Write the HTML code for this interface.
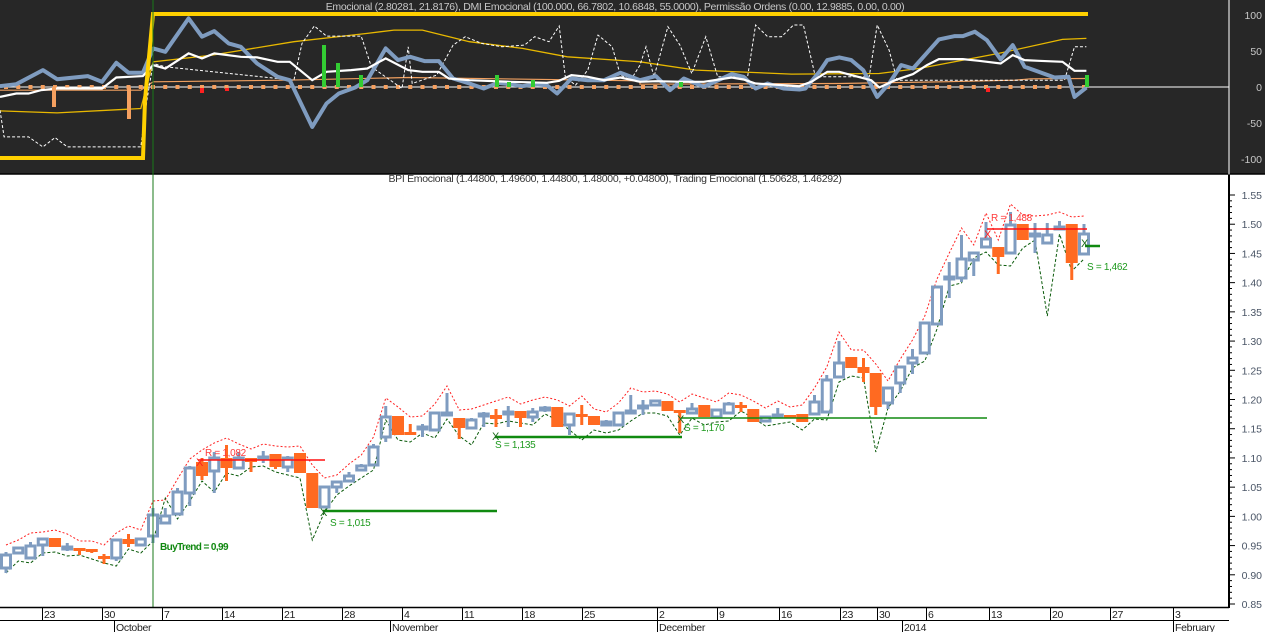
<!DOCTYPE html>
<html><head><meta charset="utf-8"><style>
html,body{margin:0;padding:0;background:#fff;width:1265px;height:632px;overflow:hidden;font-family:"Liberation Sans",sans-serif}
svg{position:absolute;left:0;top:0}
text{font-family:"Liberation Sans",sans-serif}
</style></head><body>
<svg id="s" width="1265" height="632" viewBox="0 0 1265 632" xmlns="http://www.w3.org/2000/svg">
<rect x="0" y="0" width="1265" height="174" fill="#272727"/>
<line x1="0" y1="174" x2="1265" y2="174" fill="none" stroke="#000" stroke-width="1.5"/>
<line x1="1229" y1="0" x2="1229" y2="174" stroke="#bbb" stroke-width="1.5"/>
<g id="topg"></g>
<g id="price"></g>
<text x="615" y="10" font-size="10.5" fill="#c8c8c8" text-anchor="middle" letter-spacing="-0.3">Emocional (2.80281, 21.8176), DMI Emocional (100.000, 66.7802, 10.6848, 55.0000), Permissão Ordens (0.00, 12.9885, 0.00, 0.00)</text>
<g font-size="10.5" fill="#c8c8c8" text-anchor="end">
<text x="1262" y="19">100</text><text x="1262" y="55">50</text><text x="1262" y="91">0</text><text x="1262" y="127">-50</text><text x="1262" y="163">-100</text>
</g>
<text x="615" y="182" font-size="10.5" fill="#333" text-anchor="middle" letter-spacing="-0.3">BPI Emocional (1.44800, 1.49600, 1.44800, 1.48000, +0.04800), Trading Emocional (1.50628, 1.46292)</text>
<line x1="1229" y1="175" x2="1229" y2="608" stroke="#000" stroke-width="2"/>
<g id="paxis" font-size="10.5" fill="#4a5566" text-anchor="end"></g>
<line x1="153" y1="0" x2="153" y2="607" stroke="#1a7a1a" stroke-width="1"/>
<line x1="0" y1="607.5" x2="1229" y2="607.5" stroke="#000" stroke-width="1.5"/>
<line x1="0" y1="620.5" x2="1229" y2="620.5" stroke="#000" stroke-width="1"/>
<g id="dax" stroke="#000" stroke-width="1"></g>
<g font-size="10.5" fill="#222" letter-spacing="-0.3">
<text x="44" y="618">23</text><text x="104" y="618">30</text><text x="164" y="618">7</text><text x="224" y="618">14</text><text x="284" y="618">21</text><text x="344" y="618">28</text><text x="404" y="618">4</text><text x="464" y="618">11</text><text x="524" y="618">18</text><text x="584" y="618">25</text><text x="659" y="618">2</text><text x="719" y="618">9</text><text x="781" y="618">16</text><text x="842" y="618">23</text><text x="879" y="618">30</text><text x="928" y="618">6</text><text x="991" y="618">13</text><text x="1052" y="618">20</text><text x="1112" y="618">27</text><text x="1175" y="618">3</text>
<text x="116" y="631">October</text><text x="392" y="631">November</text><text x="659" y="631">December</text><text x="904" y="631">2014</text><text x="1175" y="631">February</text>
</g>
<g font-size="10" letter-spacing="-0.3">
<text x="205" y="456" fill="#ff3a3a">R = 1,082</text>
<text x="330" y="526" fill="#1e9a1e">S = 1,015</text>
<text x="495" y="448" fill="#1e9a1e">S = 1,135</text>
<text x="684" y="431" fill="#1e9a1e">S = 1,170</text>
<text x="991" y="221" fill="#ff3a3a">R = 1,488</text>
<text x="1087" y="270" fill="#1e9a1e">S = 1,462</text>
<text x="160" y="550" fill="#108810" font-weight="bold" letter-spacing="-0.6">BuyTrend = 0,99</text>
</g>
</svg>
<script>
(function(){
var NS="http://www.w3.org/2000/svg";
function el(p,t,a){var e=document.createElementNS(NS,t);for(var k in a)e.setAttribute(k,a[k]);p.appendChild(e);return e;}
var tg=document.getElementById('topg'),pr=document.getElementById('price');
function pl(g,pts,st){var a={points:pts.map(function(p){return p[0].toFixed(1)+','+p[1].toFixed(1)}).join(' '),fill:'none'};for(var k in st)a[k]=st[k];el(g,'polyline',a);}
function z1(a){return a.map(function(p){return [p[0]*640/1568,p[1]*175/524];});}
function z2(a){return a.map(function(p){return [640+p[0]*625/1568,p[1]*175/524];});}
el(tg,'line',{x1:0,y1:87,x2:1229,y2:87,stroke:'#fff','stroke-width':1});
var i;
for(i=0;i<=88;i++){var x=6+12.25*i;el(tg,'rect',{x:x-2,y:85,width:4,height:4,fill:'#f5a060'});}
pl(tg,z1([[0,270],[345,270],[375,245],[700,240],[1000,232],[1568,242]]).concat(z2([[0,252],[500,250],[650,247],[760,245],[830,243],[940,240],[980,236],[1120,235]])),{stroke:'#f0a060','stroke-width':1.2});
pl(tg,z1([[0,332],[140,338],[345,325],[375,185],[520,165],[720,125],[900,100],[965,90],[1035,90],[1150,125],[1280,145],[1390,170],[1568,185]]).concat(z2([[140,210],[380,222],[600,220],[700,205],[900,160],[1060,118],[1120,115]])),{stroke:'#e8b800','stroke-width':1.3});
pl(tg,z1([[0,330],[10,410],[70,410],[105,440],[135,412],[165,440],[345,440],[360,300],[375,190],[405,200],[720,240],[740,130],[770,78],[800,108],[885,108],[910,200],[985,265],[1000,140],[1010,250],[1070,225],[1110,135],[1140,110],[1180,130],[1230,140],[1285,135],[1310,110],[1345,125],[1370,78],[1385,230],[1410,255],[1440,210],[1465,105],[1500,140],[1520,225],[1545,240],[1568,195]]).concat(z2([[15,140],[35,230],[70,80],[100,135],[130,220],[165,110],[195,230],[270,230],[290,75],[320,110],[355,110],[385,75],[410,75],[440,230],[575,230],[595,75],[625,150],[645,240],[1065,240],[1090,140],[1120,140]])),{stroke:'#fff','stroke-width':1,'stroke-dasharray':'3,2'});
pl(tg,z1([[0,258],[40,252],[105,210],[140,237],[215,228],[250,245],[285,188],[315,218],[350,218],[375,145],[405,155],[462,55],[495,110],[525,93],[560,130],[590,140],[630,190],[680,230],[710,240],[765,380],[800,310],[830,280],[870,262],[900,240],[945,145],[975,180],[1005,170],[1040,183],[1075,183],[1110,235],[1150,250],[1185,265],[1220,248],[1250,252],[1280,258],[1310,252],[1340,255],[1365,280],[1400,235],[1440,240],[1480,240],[1520,218],[1568,240]]).concat(z2([[40,228],[75,270],[110,235],[160,260],[230,222],[260,230],[290,265],[320,250],[360,265],[400,268],[415,265],[450,215],[470,180],[500,172],[530,180],[560,210],[595,290],[625,250],[655,195],[685,205],[715,165],[750,118],[790,108],[810,108],[840,95],[870,120],[905,178],[935,135],[965,200],[1000,215],[1040,232],[1075,230],[1090,290],[1120,262]])),{stroke:'#7f9cc0','stroke-width':4,'stroke-linejoin':'round'});
pl(tg,z1([[0,290],[40,280],[70,280],[100,270],[140,265],[250,265],[285,232],[350,228],[375,195],[405,205],[462,160],[495,175],[525,160],[590,170],[630,172],[680,185],[710,185],[765,240],[800,215],[860,210],[900,205],[945,175],[1000,210],[1035,215],[1075,215],[1100,235],[1150,240],[1250,245],[1340,248],[1370,242],[1400,225],[1440,230],[1480,240],[1520,232],[1568,245]]).concat(z2([[40,243],[110,245],[160,245],[230,232],[260,238],[290,250],[400,258],[430,245],[470,215],[500,215],[530,225],[580,240],[600,262],[640,240],[685,222],[720,195],[750,177],[810,177],[850,182],[905,190],[935,165],[965,180],[1000,182],[1060,185],[1090,212],[1120,212]])),{stroke:'#fff','stroke-width':2.2});
pl(tg,[[0,158],[143,158],[145,100],[153,14],[1088,14]],{stroke:'#ffd000','stroke-width':4});
[[54,87,107,'#f5a060'],[129,87,119,'#f5a060'],[324,45,87,'#33cc33'],[338,63,87,'#33cc33'],[361,75,87,'#33cc33'],[497,75,87,'#33cc33'],[509,82,87,'#33cc33'],[533,80,87,'#33cc33'],[681,82,87,'#33cc33'],[1087,75,87,'#33cc33'],[202,88,93,'#ff2020'],[227,88,91,'#ff2020'],[988,88,92,'#ff2020']].forEach(function(b){el(tg,'rect',{x:b[0]-2,y:b[1],width:4,height:b[2]-b[1],fill:b[3]});});
var pa=document.getElementById('paxis');
for(var p=85;p<=155;p++){var y=195+(155-p)/100*584.3;var maj=p%5==0;el(pr,'line',{x1:1229,y1:y,x2:maj?1235:1232,y2:y,stroke:'#000','stroke-width':1});
 if(maj){var t=el(pa,'text',{x:1262,y:y+4});t.textContent=(p/100).toFixed(2);}}
var dax=document.getElementById('dax');
[42,102,162,222,282,342,402,462,522,582,657,717,779,840,877,926,989,1050,1110,1173].forEach(function(x){el(dax,'line',{x1:x+.5,y1:607,x2:x+.5,y2:620});});
[114,390,657,902,1173].forEach(function(x){el(dax,'line',{x1:x+.5,y1:620,x2:x+.5,y2:632});});
var C=[[568,555,552,573],[553,548,548,553],[558,546,542,558],[545,539,539,556],[538,547,538,547],[548,547,543,551],[548,550,548,555],[549,551,549,553],[556,558,554,564],[558,540,540,561],[539,544,534,547],[545,539,539,545],[536,515,508,543],[523,516,508,523],[514,492,488,514],[493,468,466,506],[462,476,458,480],[471,458,452,493],[458,468,445,481],[468,458,452,468],[458,462,458,472],[458,457,451,463],[454,467,454,469],[467,458,456,472],[453,473,453,473],[473,508,473,508],[507,487,487,507],[487,482,482,493],[481,476,472,481],[470,466,464,470],[465,447,444,465],[437,417,406,442],[416,435,416,435],[432,434,424,434],[428,427,424,437],[430,413,413,430],[414,413,393,415],[418,428,418,439],[428,420,418,428],[415,414,412,427],[415,419,409,427],[413,412,406,427],[411,418,411,427],[417,412,408,422],[409,408,406,412],[407,427,407,427],[425,414,414,435],[414,415,405,425],[416,425,416,425],[425,422,420,425],[425,413,412,425],[413,411,395,413],[408,406,400,415],[405,401,400,405],[401,411,401,411],[410,413,410,433],[413,409,403,413],[405,417,405,417],[417,410,410,417],[413,404,402,413],[405,406,402,412],[409,422,409,422],[421,417,417,421],[416,415,408,418],[415,417,415,417],[414,422,414,422],[414,402,395,414],[412,380,375,412],[377,363,341,377],[357,368,357,368],[367,373,358,382],[373,407,373,415],[403,388,388,409],[383,367,367,393],[363,358,349,374],[353,323,323,353],[324,287,287,324],[278,277,262,298],[278,259,235,282],[260,253,253,276],[247,239,222,247],[247,257,247,274],[253,225,212,253],[224,240,224,240],[235,234,223,253],[243,235,223,243],[229,227,221,229],[224,263,224,280],[254,234,224,254]];
var red=[],grn=[];
var dips={25:540,31:420,45:420,55:435,61:418,71:452,85:316,13:498,17:492,38:445,47:440,79:258,82:266};
for(i=0;i<C.length;i++){var c=C[i],x=6+12.25*i,o=c[0],cl=c[1],h=Math.min(c[2],o,cl);
 var t0=Math.min(o,cl),b0=Math.max(o,cl);
 red.push([x,Math.min(h,t0)-7-(i%3)]);grn.push([x,dips[i]||b0+5+(i%2)*3]);}
pl(pr,red,{stroke:'#ff2020','stroke-width':1,'stroke-dasharray':'2,2'});
pl(pr,grn,{stroke:'#0a5a0a','stroke-width':1,'stroke-dasharray':'3,2'});
for(i=0;i<C.length;i++){var c=C[i],x=6+12.25*i,o=c[0],cl=c[1],h=Math.min(c[2],o,cl),l=Math.max(c[3],o,cl);
 var up=cl<o||(cl==o&&i%2==1),tpp=Math.min(o,cl),bt=Math.max(o,cl);
 var col=up?'#7f9cc0':'#ff6a21';
 el(pr,'line',{x1:x,y1:h,x2:x,y2:tpp,stroke:col,'stroke-width':3});
 el(pr,'line',{x1:x,y1:bt,x2:x,y2:l,stroke:col,'stroke-width':3});
 if(up){el(pr,'rect',{x:x-4.5,y:tpp,width:9,height:Math.max(bt-tpp,2),fill:'none',stroke:col,'stroke-width':3});}
 else{el(pr,'rect',{x:x-6,y:tpp,width:12,height:Math.max(bt-tpp,3),fill:col});}}
el(pr,'line',{x1:198,y1:460,x2:325,y2:460,stroke:'#ff1010','stroke-width':1.5});
el(pr,'line',{x1:323,y1:511,x2:497,y2:511,stroke:'#108a10','stroke-width':2.5});
el(pr,'line',{x1:495,y1:437,x2:682,y2:437,stroke:'#108a10','stroke-width':2.5});
el(pr,'line',{x1:681,y1:418,x2:987,y2:418,stroke:'#108a10','stroke-width':1.5});
el(pr,'line',{x1:987,y1:229,x2:1087,y2:229,stroke:'#ff1010','stroke-width':1.5});
el(pr,'line',{x1:1085,y1:246,x2:1100,y2:246,stroke:'#108a10','stroke-width':2.5});
function X(x,y,c){var t=el(pr,'text',{x:x-4,y:y+4,'font-size':11,fill:c});t.textContent='X';}
X(200,462,'#ff2020');X(324,512,'#1a6a1a');X(496,436,'#1a6a1a');X(681,419,'#1a6a1a');X(988,234,'#ff2020');X(1085,243,'#1a6a1a');
})();
</script>
</body></html>
